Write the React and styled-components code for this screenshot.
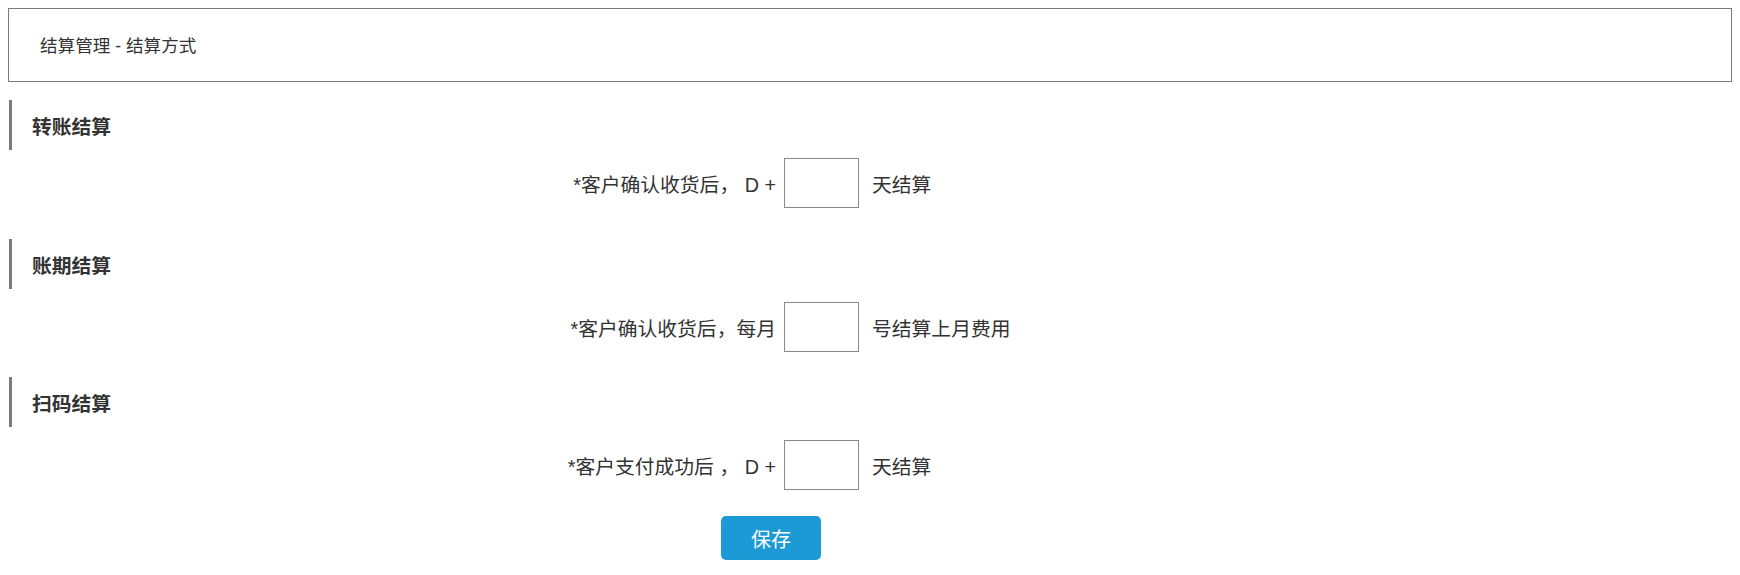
import React from "react";
import styled, { createGlobalStyle } from "styled-components";

const GlobalStyle = createGlobalStyle`
  html, body { margin: 0; padding: 0; background: #ffffff; }
  body {
    margin: 8px;
    font-family: "Noto Sans CJK SC", "Noto Sans", "Liberation Sans", sans-serif;
    color: #333333;
  }
  * { box-sizing: border-box; }
`;

const Page = styled.div`
  display: flex;
  flex-direction: column;
`;

const TitleBar = styled.div`
  height: 74px;
  border: 1px solid #7a7a7a;
  display: flex;
  align-items: center;
  padding-left: 31px;
  padding-bottom: 2px;
  font-family: "Liberation Sans", "Noto Sans CJK SC", sans-serif;
  font-size: 17.6px;
  color: #333333;
`;

const SectionHeading = styled.h2`
  margin: ${(p) => p.$top}px 0 0 1px;
  height: 50px;
  border-left: 3px solid #7b7b7b;
  padding-left: 20px;
  display: flex;
  align-items: center;
  font-size: 19.8px;
  font-weight: 700;
  color: #333333;
`;

const FormRow = styled.div`
  margin-top: ${(p) => p.$top}px;
  display: grid;
  grid-template-columns: 768px 75px auto;
  column-gap: 8px;
  align-items: center;
  font-family: "Liberation Sans", "Noto Sans CJK SC", sans-serif;
  font-size: 19.8px;
  color: #333333;
`;

const Label = styled.label`
  text-align: right;
  white-space: pre;
`;

const NumberInput = styled.input`
  width: 75px;
  height: 50px;
  border: 1px solid #8a8a8a;
  background: #ffffff;
  font-size: 18px;
  padding: 0 6px;
  outline: none;
`;

const Suffix = styled.span`
  padding-left: 5px;
  white-space: nowrap;
`;

const Actions = styled.div`
  margin-top: 26px;
  padding-left: 713px;
  display: flex;
`;

const SaveButton = styled.button`
  width: 100px;
  height: 44px;
  border: none;
  border-radius: 5px;
  background: #1c9ad6;
  color: #ffffff;
  font-family: "Noto Sans CJK SC", "Noto Sans", sans-serif;
  font-size: 20px;
  cursor: pointer;
`;

const sections = [
  {
    title: "转账结算",
    top: 18,
    rowTop: 8,
    label: "*客户确认收货后， D +",
    suffix: "天结算",
  },
  {
    title: "账期结算",
    top: 31,
    rowTop: 13,
    label: "*客户确认收货后，每月",
    suffix: "号结算上月费用",
  },
  {
    title: "扫码结算",
    top: 25,
    rowTop: 13,
    label: "*客户支付成功后 ， D +",
    suffix: "天结算",
  },
];

export default function App() {
  return (
    <>
      <GlobalStyle />
      <Page>
        <TitleBar>结算管理 - 结算方式</TitleBar>
        {sections.map((s) => (
          <React.Fragment key={s.title}>
            <SectionHeading $top={s.top}>{s.title}</SectionHeading>
            <FormRow $top={s.rowTop}>
              <Label>{s.label}</Label>
              <NumberInput type="text" />
              <Suffix>{s.suffix}</Suffix>
            </FormRow>
          </React.Fragment>
        ))}
        <Actions>
          <SaveButton type="button">保存</SaveButton>
        </Actions>
      </Page>
    </>
  );
}
